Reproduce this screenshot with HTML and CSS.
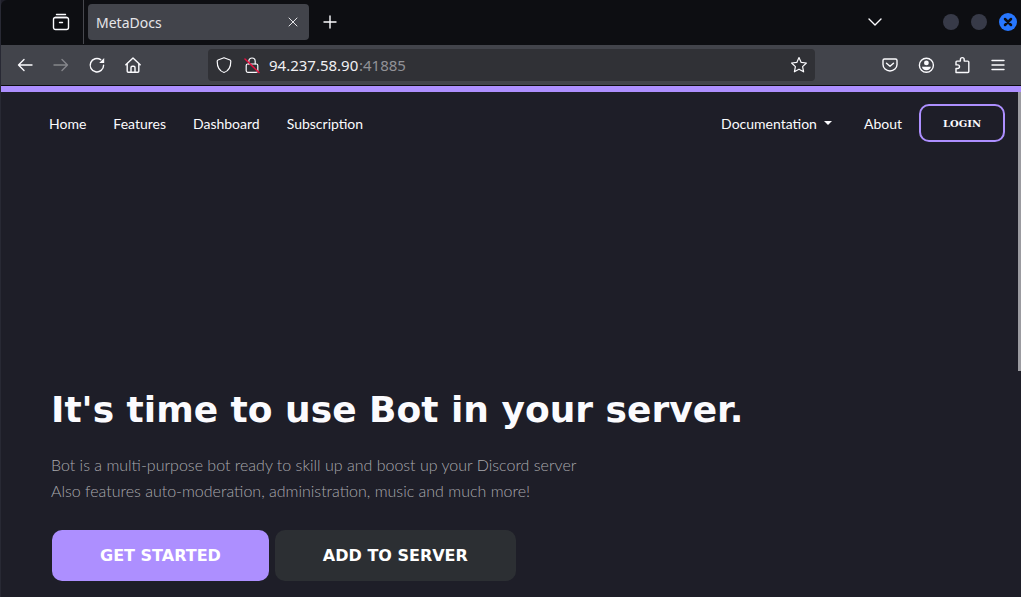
FILE: index.html
```html
<!DOCTYPE html>
<html lang="en">
<head>
<meta charset="utf-8">
<meta name="viewport" content="width=device-width, initial-scale=1">
<title>MetaDocs</title>
<link rel="stylesheet" href="styles.css">
</head>
<body>
<div class="window">
  <div class="tabbar">
    <button class="icon-btn tabbar-view" aria-label="Firefox View">
      <svg class="icon stroke" viewBox="0 0 18 18"><path d="M4.500 1.500h9M3 4.500h12"/><rect x="1.500" y="4.500" width="15" height="12" rx="2"/><path d="M7.500 9.500h3"/></svg>
    </button>
    <div class="tab">
      <span class="tab-title">MetaDocs</span>
      <button class="icon-btn tab-close" aria-label="Close tab"><svg class="icon-sm hairline" viewBox="0 0 10 10"><path d="M1 1l8 8M9 1l-8 8"/></svg></button>
    </div>
    <button class="icon-btn tab-new" aria-label="New tab"><svg class="icon-md stroke" viewBox="0 0 14 14"><path d="M7 1v12M1 7h12"/></svg></button>
    <button class="icon-btn tab-list" aria-label="List all tabs"><svg class="icon-md stroke" viewBox="0 0 14 14"><path d="M1 4l6 6 6-6"/></svg></button>
    <div class="controls">
      <button class="control" aria-label="Minimize"></button>
      <button class="control" aria-label="Maximize"></button>
      <button class="control control-close" aria-label="Close"><svg class="icon-sm bold" viewBox="0 0 10 10"><path d="M2 2l6 6M8 2l-6 6"/></svg></button>
    </div>
  </div>

  <div class="toolbar">
    <div class="tools tools-left">
      <button class="icon-btn" aria-label="Back"><svg class="icon stroke" viewBox="0 0 18 18"><path d="M16 9H2.500M8 3.500L2.500 9 8 14.500"/></svg></button>
      <button class="icon-btn" aria-label="Forward" disabled><svg class="icon stroke" viewBox="0 0 18 18"><path d="M2 9h13.500M10 3.500L15.500 9 10 14.500"/></svg></button>
      <button class="icon-btn" aria-label="Reload"><svg class="icon stroke" viewBox="0 0 18 18"><path d="M15.600 9.200A6.700 6.700 0 1 1 12.700 3.700"/><path class="fill" d="M16.200 2v5h-5z"/></svg></button>
      <button class="icon-btn" aria-label="Home"><svg class="icon stroke" viewBox="0 0 18 18"><path d="M1.800 8.700L9 2l7.200 6.700M3.200 7.700v7.500q0 1.100 1.100 1.100h9.400q1.100 0 1.100-1.100V7.700M7 16v-4.500q0-1.300 1.300-1.300h1.400q1.300 0 1.300 1.300V16"/></svg></button>
    </div>
    <div class="urlbar">
      <div class="site-info">
        <svg class="icon thin" viewBox="0 0 18 18"><path d="M9 1.700l6 2.300q.8.300.8 1.200C15.800 11 13.500 15 9 16.500 4.500 15 2.200 11 2.200 5.200q0-.9.800-1.200z"/></svg>
        <svg class="icon thin" viewBox="0 0 18 18"><rect x="3.200" y="8" width="11.600" height="8.300" rx="1.500"/><path d="M5.800 8V5.200a3.200 3.200 0 0 1 6.400 0V8"/><path class="slash" d="M2 3l14 13.500"/></svg>
      </div>
      <span class="address"><input class="address-host" type="text" value="94.237.58.90" aria-label="Address"><span class="address-port">:41885</span></span>
      <button class="icon-btn url-star" aria-label="Bookmark"><svg class="icon thin" viewBox="0 0 18 18"><path d="M9 1.600l2.200 4.800 5.200.6-3.800 3.600 1 5.200L9 13.200l-4.600 2.600 1-5.200L1.600 7l5.200-.6z"/></svg></button>
    </div>
    <div class="tools tools-right">
      <button class="icon-btn" aria-label="Pocket"><svg class="icon stroke" viewBox="0 0 18 18"><path d="M3.500 3h11q1.500 0 1.500 1.500v4a7 6.500 0 0 1-14 0v-4Q2 3 3.500 3zM5.500 7.200L9 10.300l3.500-3.100"/></svg></button>
      <button class="icon-btn" aria-label="Account"><svg class="icon stroke" viewBox="0 0 18 18"><circle cx="9.400" cy="9.200" r="7"/><circle class="fill" cx="9.400" cy="6.900" r="2.400"/><path class="fill" d="M5 10.800h8.800q-.5 3.400-4.400 3.400t-4.400-3.400z"/></svg></button>
      <button class="icon-btn" aria-label="Extensions"><svg class="icon stroke" viewBox="0 0 18 18"><path d="M3 16.500v-4h1.700a1.800 1.800 0 0 0 0-3.600H3V6q0-.9.900-.9h3.500V3.500a1.900 1.900 0 0 1 3.800 0v1.600h3.700q.9 0 .9.900v9.600q0 .9-.9.900z"/></svg></button>
      <button class="icon-btn" aria-label="Menu"><svg class="icon stroke" viewBox="0 0 18 18"><path d="M3 4.500h12M3 9h12M3 13.500h12"/></svg></button>
    </div>
  </div>

  <main class="page">
    <header class="site-header">
      <nav class="nav" aria-label="Main">
        <a href="#">Home</a>
        <a href="#">Features</a>
        <a href="#">Dashboard</a>
        <a href="#">Subscription</a>
      </nav>
      <nav class="nav nav-end" aria-label="Secondary">
        <a class="dropdown" href="#">Documentation</a>
        <a href="#">About</a>
        <button class="login">LOGIN</button>
      </nav>
    </header>
    <section class="hero">
      <h1>It's time to use Bot in your server.</h1>
      <p>Bot is a multi-purpose bot ready to skill up and boost up your Discord server<br>Also features auto-moderation, administration, music and much more!</p>
      <div class="actions">
        <button class="btn btn-primary">GET STARTED</button>
        <button class="btn">ADD TO SERVER</button>
      </div>
    </section>
    <div class="scroll-thumb"></div>
  </main>
</div>
</body>
</html>
```
FILE: styles.css
```css
* { box-sizing: border-box; }

body {
  margin: 0;
  background: #1e1e28;
  color: #fbfbfe;
  font-family: "Noto Sans", sans-serif;
}

button {
  border: 0;
  padding: 0;
  background: none;
  color: inherit;
  font: inherit;
}

a { color: inherit; text-decoration: none; }

.window {
  display: flex;
  flex-direction: column;
  min-height: 100vh;
  border-left: 1px solid #282934;
}

/* Icons */
.icon { width: 18px; height: 18px; }
.icon-md { width: 14px; height: 14px; }
.icon-sm { width: 10px; height: 10px; }
svg { display: block; flex: none; fill: none; stroke: currentColor; stroke-linecap: round; stroke-linejoin: round; }
.stroke { stroke-width: 1.400; }
.thin { stroke-width: 1.200; }
.hairline { stroke-width: 1; }
.bold { stroke-width: 2.500; }
.fill { fill: currentColor; stroke: none; }
.slash { stroke: #e4103f; stroke-width: 1.500; }

.icon-btn { display: grid; place-items: center; flex: none; }
.icon-btn:disabled { color: #85868b; }

/* Tab strip */
.tabbar {
  display: flex;
  align-items: center;
  height: 45px;
  padding-bottom: 1px;
  background: #0d0e12;
  border-top-left-radius: 6px;
}

.tabbar-view {
  width: 83px;
  height: 44px;
  padding-left: 37px;
  border-right: 1px solid #47484e;
}

.tab {
  display: flex;
  align-items: center;
  justify-content: space-between;
  width: 221px;
  height: 36px;
  margin-left: 4px;
  padding: 0 11px 0 8px;
  border-radius: 4px;
  background: #42444b;
  color: #e6e6e9;
  font-size: 14px;
}

.tab-new { width: 42px; height: 36px; }
.tab-list { width: 36px; height: 36px; margin-left: auto; }

.controls {
  display: flex;
  align-items: center;
  gap: 12px;
  margin: 0 4px 0 50px;
}

.control {
  width: 16px;
  height: 16px;
  border-radius: 50%;
  background: #373a48;
}

.control-close {
  display: grid;
  place-items: center;
  width: 18px;
  height: 18px;
  background: #2777ff;
  color: #0d0e12;
}

/* Navigation toolbar */
.toolbar {
  display: flex;
  align-items: center;
  height: 41px;
  background: #42444b;
  border-bottom: 1px solid #0b0b10;
}

.tools { display: flex; gap: 18px; }
.tools-left { padding-left: 15px; }
.tools-right { padding: 0 14px 0 66px; }

.urlbar {
  display: flex;
  flex: 1;
  align-items: center;
  gap: 8px;
  height: 32px;
  margin-left: 66px;
  padding: 0 7px;
  border-radius: 4px;
  background: #303136;
}

.site-info { display: flex; gap: 10px; }

.address {
  display: flex;
  align-items: baseline;
  flex: 1;
  font-size: 15px;
}

.address-host {
  width: 90px;
  padding: 0;
  border: 0;
  background: none;
  color: #f0f0f3;
  font: inherit;
  outline: 0;
}

.address-port { color: #929297; }

/* Page */
.page {
  position: relative;
  flex: 1;
  border-top: 6px solid #ad8fff;
  font-family: Lato, sans-serif;
}

.site-header {
  display: flex;
  align-items: center;
  justify-content: space-between;
  padding: 12px 16px 0 48px;
  font-size: 14px;
}

.nav { display: flex; align-items: center; gap: 27px; }
.nav-end { gap: 17px; }

.dropdown {
  display: flex;
  align-items: center;
  gap: 7px;
  margin-right: 15px;
}

.dropdown::after {
  content: "";
  border: 4px solid transparent;
  border-top-color: currentColor;
  border-bottom: 0;
}

.login {
  width: 86px;
  height: 38px;
  border: 2px solid #ad8fff;
  border-radius: 10px;
  font: bold 10px "DejaVu Serif", serif;
}

.hero { padding: 246px 50px 16px; }

h1 {
  margin: 0;
  font: bold 36px/44px "DejaVu Sans", sans-serif;
}

p {
  margin: 20px 0 26px;
  color: #a8a8ad;
  font-size: 16px;
  font-weight: 300;
  line-height: 26px;
}

.actions { display: flex; gap: 6px; padding-left: 1px; }

.btn {
  padding: 16px 48px;
  border-radius: 10px;
  background: #2c2f33;
  color: #fff;
  font: bold 16px/19px "DejaVu Sans", sans-serif;
}

.btn-primary { background: #ad8fff; }

.scroll-thumb {
  position: absolute;
  top: 0;
  right: 0;
  width: 3px;
  height: 279px;
  background: #9b9ba0;
}
```
